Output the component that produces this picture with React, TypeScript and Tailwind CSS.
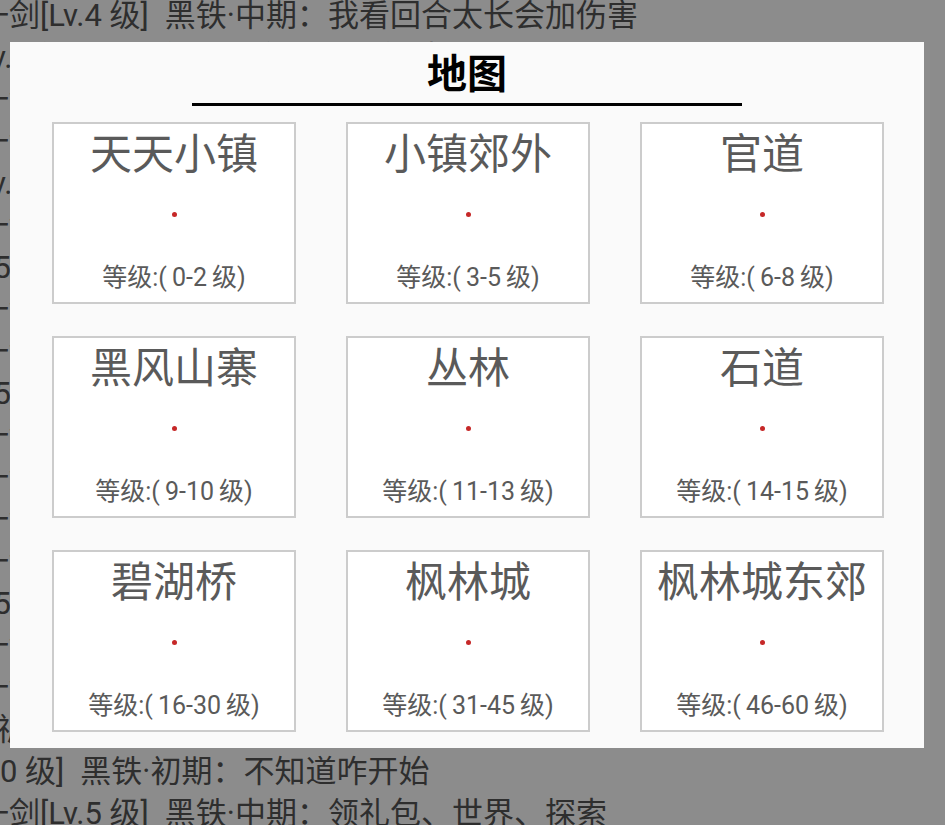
import React from 'react';

// 聊天记录（被遮罩压暗的底层页面）
const chatLines = [
  { cls: '-ml-[22px]', name: '一剑[Lv.4 级]', msg: '黑铁·中期：我看回合太长会加伤害' },
  { cls: '-ml-[32px]', name: '[Lv.3 级]', msg: '黑铁·初期：有人一起组队吗' },
  { cls: '-ml-[22px]', name: '一剑[Lv.4 级]', msg: '黑铁·中期：先把装备强化一下' },
  { cls: '-ml-[22px]', name: '一剑[Lv.4 级]', msg: '黑铁·中期：小镇郊外刷怪快' },
  { cls: '-ml-[32px]', name: '[Lv.2 级]', msg: '黑铁·初期：好的谢谢' },
  { cls: '-ml-[22px]', name: '一剑[Lv.4 级]', msg: '黑铁·中期：不客气' },
  { cls: '-ml-[24px]', name: '15 级]', msg: '青铜·初期：官道那边掉落不错' },
  { cls: '-ml-[22px]', name: '一剑[Lv.4 级]', msg: '黑铁·中期：收到' },
  { cls: '-ml-[22px]', name: '一剑[Lv.4 级]', msg: '黑铁·中期：等我升到六级' },
  { cls: '-ml-[24px]', name: '15 级]', msg: '青铜·初期：石道的怪有点难打' },
  { cls: '-ml-[22px]', name: '一剑[Lv.4 级]', msg: '黑铁·中期：带好药' },
  { cls: '-ml-[22px]', name: '一剑[Lv.4 级]', msg: '黑铁·中期：丛林里有精英怪' },
  { cls: '-ml-[22px]', name: '一剑[Lv.4 级]', msg: '黑铁·中期：晚上一起打' },
  { cls: '-ml-[22px]', name: '一剑[Lv.4 级]', msg: '黑铁·中期：记得签到' },
  { cls: '-ml-[24px]', name: '25 级]', msg: '青铜·中期：碧湖桥见' },
  { cls: '-ml-[22px]', name: '一剑[Lv.4 级]', msg: '黑铁·中期：好' },
  { cls: '-ml-[22px]', name: '一剑[Lv.4 级]', msg: '黑铁·中期：马上到' },
  { cls: '-ml-[4px]', name: '祈福[Lv.8 级]', msg: '黑铁·后期：新人多多关照' },
  { cls: 'ml-0', name: '0 级]', msg: '黑铁·初期：不知道咋开始' },
  { cls: '-ml-[22px]', name: '一剑[Lv.5 级]', msg: '黑铁·中期：领礼包、世界、探索' },
];

const maps = [
  { name: '天天小镇', level: '0-2' },
  { name: '小镇郊外', level: '3-5' },
  { name: '官道', level: '6-8' },
  { name: '黑风山寨', level: '9-10' },
  { name: '丛林', level: '11-13' },
  { name: '石道', level: '14-15' },
  { name: '碧湖桥', level: '16-30' },
  { name: '枫林城', level: '31-45' },
  { name: '枫林城东郊', level: '46-60' },
];

const font = "font-['Roboto','Noto_Sans_CJK_SC',sans-serif]";

function MapCard({ name, level }: { name: string; level: string }) {
  return (
    <div className="h-[182px] border-2 border-[#cccccc] bg-white flex flex-col items-center">
      <div className="pt-[6px] text-[42px] leading-[50px] text-[#5a5a5a] whitespace-nowrap">{name}</div>
      <div className="mt-[32px] w-[5px] h-[5px] rounded-full bg-[#c62828]" />
      <div className="mt-[46px] text-[25px] leading-[30px] text-[#5a5a5a] whitespace-nowrap">
        等级:(&thinsp;{level}&thinsp;级)
      </div>
    </div>
  );
}

export default function App() {
  return (
    <div className={`relative w-full h-[825px] overflow-hidden bg-white ${font}`}>
      <div className="-mt-[5px] text-[31px] leading-[42px] text-[#555555]">
        {chatLines.map((line, i) => (
          <div key={i} className={`h-[42px] whitespace-nowrap ${line.cls}`}>
            {line.name}
            <span className="ml-[16px]">{line.msg}</span>
          </div>
        ))}
      </div>

      <div className="absolute inset-0 bg-black/45" />

      <div className="absolute left-[10px] top-[42px] w-[914px] h-[706px] bg-[#fafafa] flex flex-col items-center pt-[9px]">
        <div className="w-[550px] pb-[4px] border-b-[3px] border-black text-center text-[40px] leading-[48px] font-bold text-black">
          地图
        </div>
        <div className="self-start ml-[42px] mt-[16px] grid grid-cols-[244px_244px_244px] gap-x-[50px] gap-y-[32px]">
          {maps.map((m) => (
            <MapCard key={m.name} name={m.name} level={m.level} />
          ))}
        </div>
      </div>
    </div>
  );
}
